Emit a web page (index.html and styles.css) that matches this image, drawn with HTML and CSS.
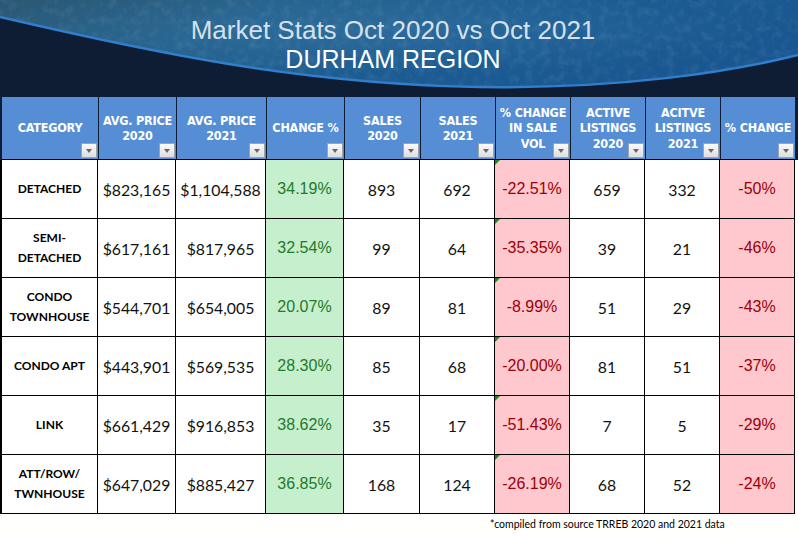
FILE: index.html
```html
<!DOCTYPE html>
<html>
<head>
<meta charset="utf-8">
<link rel="stylesheet" href="styles.css">
</head>
<body>
<div class="page">
  <div class="top">
    <div class="banner">
      <svg class="swoosh" width="798" height="97" viewBox="0 0 798 97">
        <defs>
          <linearGradient id="sky" x1="0" y1="0" x2="1" y2="0.3">
            <stop offset="0" stop-color="#2b5873"/>
            <stop offset="0.35" stop-color="#24618c"/>
            <stop offset="0.7" stop-color="#1b5b92"/>
            <stop offset="1" stop-color="#1a5791"/>
          </linearGradient>
          <radialGradient id="glow" cx="0.45" cy="0.35" r="0.5">
            <stop offset="0" stop-color="#3a7aa8" stop-opacity="0.45"/>
            <stop offset="1" stop-color="#3a7aa8" stop-opacity="0"/>
          </radialGradient>
          <filter id="grain" x="0" y="0" width="100%" height="100%">
            <feTurbulence type="fractalNoise" baseFrequency="0.12" numOctaves="3" seed="7" result="n"/>
            <feColorMatrix in="n" type="matrix" values="0 0 0 0 0.7  0 0 0 0 0.82  0 0 0 0 0.95  0 0 0 1.4 -0.6"/>
            <feComposite in2="SourceGraphic" operator="in"/>
          </filter>
          <clipPath id="skyclip">
            <path d="M0,17 C150,52 300,84 480,87 C620,89 730,72 798,55 L798,0 L0,0 Z"/>
          </clipPath>
        </defs>
        <rect width="798" height="97" fill="#0e1c34"/>
        <path d="M0,17 C150,52 300,84 480,87 C620,89 730,72 798,55 L798,0 L0,0 Z" fill="url(#sky)"/>
        <path d="M0,17 C150,52 300,84 480,87 C620,89 730,72 798,55 L798,0 L0,0 Z" fill="url(#glow)"/>
        <g clip-path="url(#skyclip)" opacity="0.14">
          <rect width="798" height="97" fill="#ffffff" filter="url(#grain)"/>
        </g>
        <path d="M0,17 C150,52 300,84 480,87 C620,89 730,72 798,55" fill="none" stroke="#2f7fcc" stroke-width="2.5"/>
      </svg>
      <div class="title1">Market Stats Oct 2020 vs Oct 2021</div>
      <div class="title2">DURHAM REGION</div>
    </div>
    <div class="head grid">
      <div class="hc">CATEGORY<span class="flt"></span></div>
      <div class="hc">AVG. PRICE<br>2020<span class="flt"></span></div>
      <div class="hc">AVG. PRICE<br>2021<span class="flt"></span></div>
      <div class="hc">CHANGE %<span class="flt"></span></div>
      <div class="hc">SALES<br>2020<span class="flt"></span></div>
      <div class="hc">SALES<br>2021<span class="flt"></span></div>
      <div class="hc">% CHANGE<br>IN SALE<br>VOL<span class="flt"></span></div>
      <div class="hc">ACTIVE<br>LISTINGS<br>2020<span class="flt"></span></div>
      <div class="hc">ACITVE<br>LISTINGS<br>2021<span class="flt"></span></div>
      <div class="hc last">% CHANGE<span class="flt"></span></div>
    </div>
  </div>
  <div class="body grid">
    <div class="c cat">DETACHED</div><div class="c num">$823,165</div><div class="c num">$1,104,588</div><div class="c pos">34.19%</div><div class="c num">893</div><div class="c num">692</div><div class="c neg mark">-22.51%</div><div class="c num">659</div><div class="c num">332</div><div class="c neg">-50%</div>
    <div class="c cat">SEMI-<br>DETACHED</div><div class="c num">$617,161</div><div class="c num">$817,965</div><div class="c pos">32.54%</div><div class="c num">99</div><div class="c num">64</div><div class="c neg mark">-35.35%</div><div class="c num">39</div><div class="c num">21</div><div class="c neg">-46%</div>
    <div class="c cat">CONDO<br>TOWNHOUSE</div><div class="c num">$544,701</div><div class="c num">$654,005</div><div class="c pos">20.07%</div><div class="c num">89</div><div class="c num">81</div><div class="c neg mark">-8.99%</div><div class="c num">51</div><div class="c num">29</div><div class="c neg">-43%</div>
    <div class="c cat">CONDO APT</div><div class="c num">$443,901</div><div class="c num">$569,535</div><div class="c pos">28.30%</div><div class="c num">85</div><div class="c num">68</div><div class="c neg mark">-20.00%</div><div class="c num">81</div><div class="c num">51</div><div class="c neg">-37%</div>
    <div class="c cat">LINK</div><div class="c num">$661,429</div><div class="c num">$916,853</div><div class="c pos">38.62%</div><div class="c num">35</div><div class="c num">17</div><div class="c neg mark">-51.43%</div><div class="c num">7</div><div class="c num">5</div><div class="c neg">-29%</div>
    <div class="c cat">ATT/ROW/<br>TWNHOUSE</div><div class="c num">$647,029</div><div class="c num">$885,427</div><div class="c pos">36.85%</div><div class="c num">168</div><div class="c num">124</div><div class="c neg mark">-26.19%</div><div class="c num">68</div><div class="c num">52</div><div class="c neg">-24%</div>
  </div>
  <div class="note">*compiled from source TRREB 2020 and 2021 data</div>
</div>
</body>
</html>
```

FILE: styles.css
```css
* { box-sizing: border-box; }
html, body { margin: 0; padding: 0; background: #ffffff; }
.page { width: 798px; height: 536px; overflow: hidden; background: #fffffe; }

.top { background: #0e1c34; padding: 0 4px 0 2px; }
.banner {
  position: relative;
  height: 97px;
  margin: 0 -4px 0 -2px;
  padding-top: 16px;
  padding-right: 12px;
  text-align: center;
  font-family: "Liberation Sans", Arial, sans-serif;
}
.swoosh { position: absolute; left: 0; top: 0; }
.title1 { position: relative; font-size: 26px; line-height: 29px; color: #d6e1ec; }
.title2 { position: relative; font-size: 25px; line-height: 29px; color: #ffffff; }

.grid {
  display: grid;
  grid-template-columns: 97px 78px 90px 78px 76px 75px 75px 75px 75px 74px;
}

.head { height: 63px; }
.hc {
  position: relative;
  background: #558ed5;
  border-right: 1px solid #0e1c34;
  border-bottom: 1px solid #000;
  display: flex;
  align-items: center;
  justify-content: center;
  text-align: center;
  color: #ffffff;
  font-family: "DejaVu Sans Condensed", "DejaVu Sans", sans-serif;
  font-weight: bold;
  font-size: 12.5px;
  line-height: 15.5px;
  letter-spacing: -0.2px;
  padding: 0 1px;
}
.hc.last { border-right: none; }
.flt {
  position: absolute;
  right: 1px;
  bottom: 1px;
  width: 16px;
  height: 15px;
  background: linear-gradient(#fbfbfb, #dedede);
  border: 1px solid #9aa4b0;
}
.flt::after {
  content: "";
  position: absolute;
  left: 4px;
  top: 5px;
  border-left: 3.5px solid transparent;
  border-right: 3.5px solid transparent;
  border-top: 4px solid #666666;
}

.body {
  border-left: 2px solid #000;
  width: 796px;
  grid-auto-rows: 59px;
  grid-template-columns: 96px 78px 90px 78px 76px 75px 75px 75px 75px 75px;
}
.c {
  position: relative;
  border-right: 1px solid #000;
  border-bottom: 1px solid #000;
  display: flex;
  align-items: center;
  justify-content: center;
  text-align: center;
  background: #ffffff;
  color: #000;
}
.cat {
  font-family: Lato, "Open Sans", sans-serif;
  font-weight: bold;
  font-size: 12px;
  line-height: 20px;
}
.num {
  font-family: Lato, "Open Sans", sans-serif;
  font-size: 15.8px;
  color: #111;
}
.pos, .neg {
  font-family: "Liberation Sans", Arial, sans-serif;
  font-size: 16px;
}
.pos { background: #c6efce; color: #1f7a2b; }
.neg { background: #ffc7ce; color: #9c0006; }
.mark::before {
  content: "";
  position: absolute;
  left: 0;
  top: 0;
  border-top: 5px solid #1e8a1e;
  border-right: 5px solid transparent;
}

.note {
  padding-left: 490px;
  padding-top: 4px;
  font-family: Lato, "Open Sans", sans-serif;
  font-size: 10.5px;
  color: #000;
}
```
